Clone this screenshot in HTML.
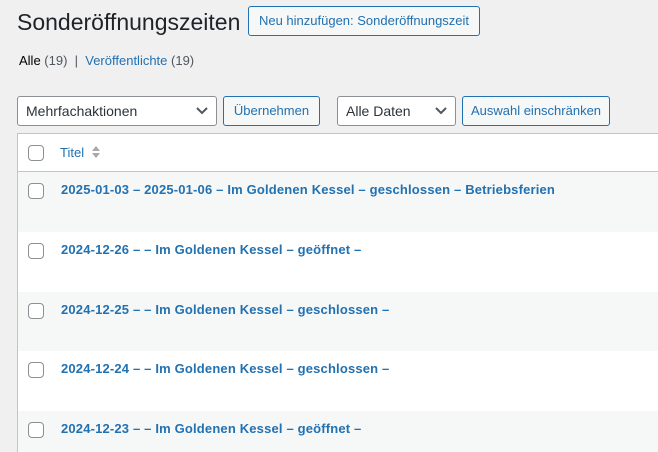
<!DOCTYPE html>
<html style="overflow:hidden;width:658px;height:452px"><head><meta charset="utf-8"><style>
*{box-sizing:border-box}
body{margin:0;width:658px;height:452px;overflow:hidden;background:#f0f0f1;font-family:"Liberation Sans",sans-serif;font-size:13px;color:#3c434a;position:relative}
.abs{position:absolute}
h1{position:absolute;left:17px;top:7px;margin:0;font-size:23px;font-weight:400;color:#1d2327;line-height:30px}
.btn{position:absolute;border:1px solid #2271b1;border-radius:3px;background:#f6f7f7;color:#2271b1;font-size:13px;line-height:28px;text-align:center;white-space:nowrap}
.sel{position:absolute;border:1px solid #8c8f94;border-radius:3px;background:#fff;color:#2c3338;font-size:14px;line-height:28px;padding-left:8px}
.sel svg{position:absolute;right:8px;top:10px}
.sub{position:absolute;left:19px;top:53px;font-size:13px;color:#50575e}
.sub b{font-weight:400;color:#000}
.sub a{color:#2271b1}
.table{position:absolute;left:17px;top:133px;width:700px;height:319px;overflow:hidden;border:1px solid #c3c4c7;border-bottom:none;background:#fff}
.head{height:38px;border-bottom:1px solid #c3c4c7;position:relative}
.row{height:59.75px;position:relative}
.row.alt{background:#f6f7f7}
.cb{position:absolute;left:10px;width:16px;height:16px;border:1px solid #8c8f94;border-radius:4px;background:#fff}
.t{position:absolute;left:43px;font-weight:700;color:#2271b1;font-size:13px;letter-spacing:0.17px;white-space:nowrap}
</style></head><body>
<h1>Sonderöffnungszeiten</h1>
<div class="btn" style="left:248px;top:6px;width:232px;height:30px">Neu hinzufügen: Sonderöffnungszeit</div>
<div class="sub"><b>Alle</b> (19) &nbsp;|&nbsp; <a>Veröffentlichte</a> (19)</div>
<div class="sel" style="left:17px;top:96px;width:200px;height:30px">Mehrfachaktionen<svg width="12" height="8" viewBox="0 0 12 8"><path d="M1 1l5 5 5-5" fill="none" stroke="#50575e" stroke-width="2"/></svg></div>
<div class="btn" style="left:223px;top:96px;width:97px;height:30px">Übernehmen</div>
<div class="sel" style="left:337px;top:96px;width:119px;height:30px">Alle Daten<svg width="12" height="8" viewBox="0 0 12 8"><path d="M1 1l5 5 5-5" fill="none" stroke="#50575e" stroke-width="2"/></svg></div>
<div class="btn" style="left:462px;top:96px;width:148px;height:30px">Auswahl einschränken</div>
<div class="table">
<div class="head"><div class="cb" style="top:11px"></div><span class="abs" style="left:42px;top:11px;color:#2271b1;font-size:13px">Titel</span>
<svg class="abs" style="left:73px;top:10px" width="10" height="16" viewBox="0 0 10 16"><path d="M1 7l4-5 4 5z M1 9l4 5 4-5z" fill="#a7aaad"/></svg></div>
<div class="row alt"><div class="cb" style="top:11px"></div><span class="t" style="top:10px">2025-01-03 – 2025-01-06 – Im Goldenen Kessel – geschlossen – Betriebsferien</span></div>
<div class="row"><div class="cb" style="top:11px"></div><span class="t" style="top:10px">2024-12-26 – – Im Goldenen Kessel – geöffnet –</span></div>
<div class="row alt"><div class="cb" style="top:11px"></div><span class="t" style="top:10px">2024-12-25 – – Im Goldenen Kessel – geschlossen –</span></div>
<div class="row"><div class="cb" style="top:11px"></div><span class="t" style="top:10px">2024-12-24 – – Im Goldenen Kessel – geschlossen –</span></div>
<div class="row alt"><div class="cb" style="top:11px"></div><span class="t" style="top:10px">2024-12-23 – – Im Goldenen Kessel – geöffnet –</span></div>
</div>
</body></html>
